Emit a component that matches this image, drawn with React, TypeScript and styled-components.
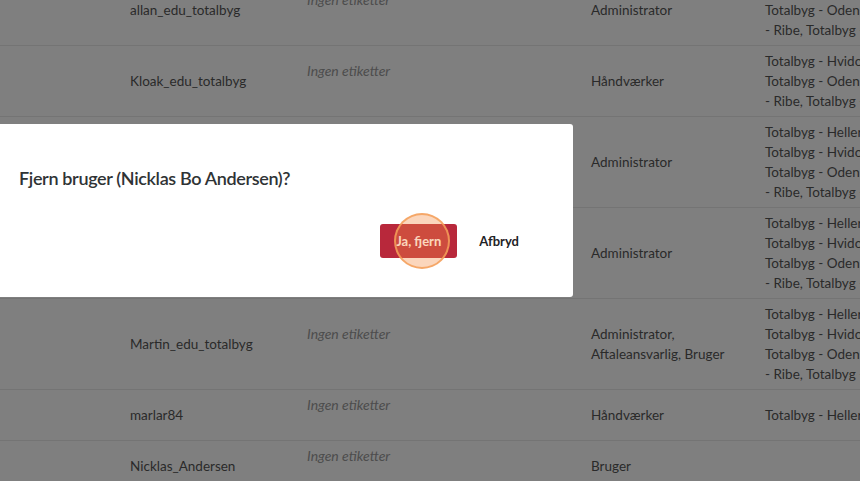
import React from 'react';
import styled, { createGlobalStyle } from 'styled-components';

const GlobalStyle = createGlobalStyle`
  html, body {
    margin: 0;
    padding: 0;
    background: #ffffff;
    overflow: hidden;
    font-family: Lato, "Liberation Sans", sans-serif;
  }
`;

const Page = styled.div`
  width: 860px;
  height: 481px;
  overflow: hidden;
  position: relative;
`;

const Table = styled.div`
  margin-top: -25px;
  display: grid;
  grid-template-columns: 118px 177px 284px 174px 400px;
  width: 1153px;
`;

const Row = styled.div`
  display: contents;
`;

const Cell = styled.div`
  padding: 5px 12px;
  border-bottom: 1px solid #e8e8e8;
  font-size: 13.5px;
  line-height: 20px;
  color: #555555;
  display: flex;
  flex-direction: column;
  justify-content: center;
`;

const Tags = styled.span`
  font-style: italic;
  font-size: 14px;
  color: #9a9a9a;
  padding-bottom: 20px;
`;

const Line = styled.span`
  white-space: nowrap;
`;

const Overlay = styled.div`
  position: fixed;
  inset: 0;
  background: rgba(0, 0, 0, 0.5);
`;

const Modal = styled.div`
  position: fixed;
  top: 124px;
  left: -4px;
  width: 577px;
  height: 173px;
  box-sizing: border-box;
  background: #ffffff;
  border-radius: 3px;
  padding: 42px 38px 0 23px;
`;

const Title = styled.h3`
  margin: 0 0 34px;
  font-size: 18px;
  line-height: 24px;
  font-weight: 600;
  letter-spacing: -0.35px;
  color: #2f3335;
`;

const Footer = styled.div`
  display: flex;
  justify-content: flex-end;
  align-items: center;
  gap: 6px;
`;

const Button = styled.button<{ $variant: 'danger' | 'plain' }>`
  position: relative;
  height: 34px;
  border: none;
  border-radius: 3px;
  font-family: inherit;
  font-size: 13px;
  font-weight: 700;
  cursor: pointer;
  ${p =>
    p.$variant === 'danger'
      ? `
    background: #b8283b;
    color: #ffffff;
    width: 77px;
    padding: 0;
  `
      : `
    background: transparent;
    color: #1f2326;
    padding: 0 16px;
  `}
`;

const ClickMark = styled.span`
  position: absolute;
  left: 50%;
  top: 50%;
  width: 52px;
  height: 52px;
  margin-left: -25px;
  margin-top: -28px;
  border-radius: 50%;
  background: rgba(245, 140, 70, 0.36);
  border: 2px solid rgba(245, 160, 90, 0.85);
  pointer-events: none;
`;

type User = {
  name: string;
  role: string;
  locations: string[];
};

const users: User[] = [
  {
    name: 'allan_edu_totalbyg',
    role: 'Administrator',
    locations: ['Totalbyg - Hvidovre,', 'Totalbyg - Odense, Totalbyg', '- Ribe, Totalbyg - Aarhus'],
  },
  {
    name: 'Kloak_edu_totalbyg',
    role: 'Håndværker',
    locations: ['Totalbyg - Hvidovre,', 'Totalbyg - Odense, Totalbyg', '- Ribe, Totalbyg - Aarhus'],
  },
  {
    name: 'Lars_edu_totalbyg',
    role: 'Administrator',
    locations: ['Totalbyg - Hellerup,', 'Totalbyg - Hvidovre,', 'Totalbyg - Odense, Totalbyg', '- Ribe, Totalbyg - Aarhus'],
  },
  {
    name: 'Jesper_edu_totalbyg',
    role: 'Administrator',
    locations: ['Totalbyg - Hellerup,', 'Totalbyg - Hvidovre,', 'Totalbyg - Odense, Totalbyg', '- Ribe, Totalbyg - Aarhus'],
  },
  {
    name: 'Martin_edu_totalbyg',
    role: 'Administrator, Aftaleansvarlig, Bruger',
    locations: ['Totalbyg - Hellerup,', 'Totalbyg - Hvidovre,', 'Totalbyg - Odense, Totalbyg', '- Ribe, Totalbyg - Aarhus'],
  },
  { name: 'marlar84', role: 'Håndværker', locations: ['Totalbyg - Hellerup'] },
  { name: 'Nicklas_Andersen', role: 'Bruger', locations: [] },
];

export default function App() {
  return (
    <Page>
      <GlobalStyle />
      <Table>
        {users.map(u => (
          <Row key={u.name}>
            <Cell />
            <Cell>{u.name}</Cell>
            <Cell>
              <Tags>Ingen etiketter</Tags>
            </Cell>
            <Cell>{u.role}</Cell>
            <Cell>
              {u.locations.length === 0 ? <Line>&nbsp;</Line> : u.locations.map(l => <Line key={l}>{l}</Line>)}
            </Cell>
          </Row>
        ))}
      </Table>
      <Overlay />
      <Modal>
        <Title>Fjern bruger (Nicklas Bo Andersen)?</Title>
        <Footer>
          <Button $variant="danger">
            Ja, fjern
            <ClickMark />
          </Button>
          <Button $variant="plain">Afbryd</Button>
        </Footer>
      </Modal>
    </Page>
  );
}
